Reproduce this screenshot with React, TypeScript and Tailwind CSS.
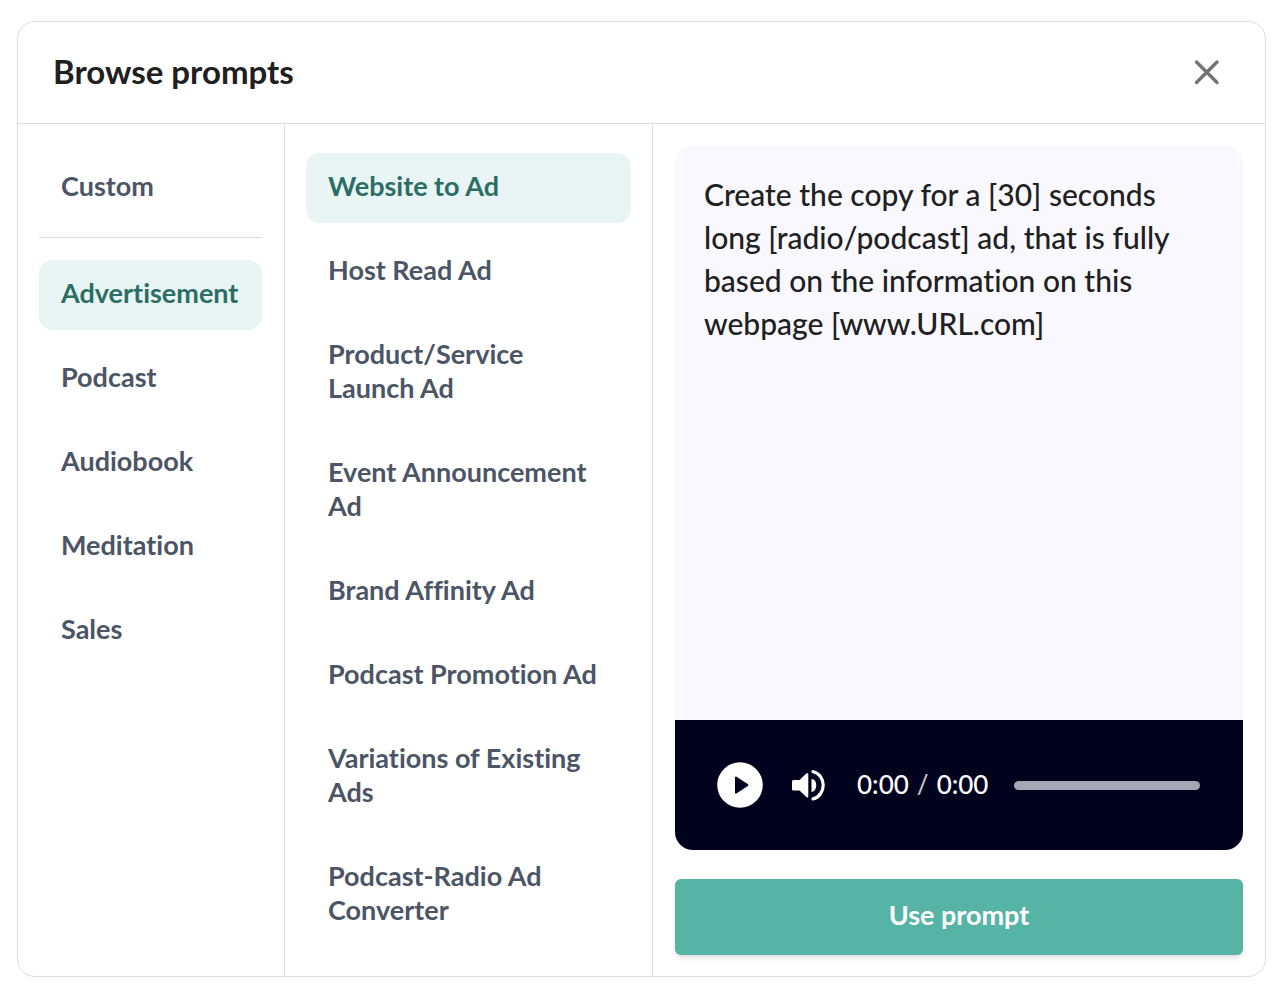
import React, { useState } from 'react';
import clsx from 'clsx';

const CATEGORIES = ['Advertisement', 'Podcast', 'Audiobook', 'Meditation', 'Sales'];

const PROMPTS = [
  'Website to Ad',
  'Host Read Ad',
  'Product/Service Launch Ad',
  'Event Announcement Ad',
  'Brand Affinity Ad',
  'Podcast Promotion Ad',
  'Variations of Existing Ads',
  'Podcast-Radio Ad Converter',
];

interface MenuItemProps {
  label: string;
  isActive: boolean;
  onSelect: (label: string) => void;
}

function MenuItem({ label, isActive, onSelect }: MenuItemProps) {
  return (
    <button
      type="button"
      aria-pressed={isActive}
      onClick={() => onSelect(label)}
      className={clsx(
        'w-full cursor-pointer rounded-[14px] px-[22px] pt-4 pb-5 text-left text-[27px] leading-[34px] font-bold',
        isActive ? 'bg-[#e9f5f5] text-[#2c6e63]' : 'text-[#4c5566]'
      )}
    >
      {label}
    </button>
  );
}

function AudioPlayer() {
  const [position, setPosition] = useState(0);

  return (
    <div className="flex h-[130px] items-center bg-[#00021e] pr-[43px] pl-[42px] text-white">
      <button type="button" aria-label="Play" className="shrink-0 cursor-pointer">
        <svg width="46" height="46" viewBox="0 0 46 46">
          <circle cx="23" cy="23" r="22.8" fill="#fff" />
          <path d="M19 15.5v15.2L30.5 23z" fill="#00021e" stroke="#00021e" strokeWidth="2" strokeLinejoin="round" />
        </svg>
      </button>

      <button type="button" aria-label="Mute" className="ml-7 shrink-0 cursor-pointer">
        <svg width="36" height="36" viewBox="0 0 36 36" fill="#fff">
          <path d="M2.5 13h6l6.8-6.6q2-1.400 2 1v21.500q0 2.400-2 1l-6.800-6.300H2.500q-1.500 0-1.500-1.500v-7.600q0-1.500 1.500-1.500z" />
          <path d="M20.5 12c3 0 4.700 2.900 4.700 6.200s-1.700 6.700-4.700 6.700z" />
          <path d="M22 4.700c6.500 1.500 10.200 7.300 10.200 13.500S28.500 30.300 22 31.900" fill="none" stroke="#fff" strokeWidth="3.2" strokeLinecap="round" />
        </svg>
      </button>

      <div className="ml-[30px] flex shrink-0 gap-2 pb-0.5 text-[26px] leading-8 font-medium">
        <span>0:00</span>
        <span className="text-[#c3c4cc]">/</span>
        <span>0:00</span>
      </div>

      <input
        type="range"
        aria-label="Seek"
        min={0}
        max={100}
        value={position}
        onChange={(e) => setPosition(Number(e.target.value))}
        className="ml-[26px] h-[9px] min-w-0 flex-1 cursor-pointer appearance-none rounded-full bg-[#a6a7b4] [&::-webkit-slider-thumb]:h-0 [&::-webkit-slider-thumb]:w-0 [&::-webkit-slider-thumb]:appearance-none"
      />
    </div>
  );
}

export default function App() {
  const [category, setCategory] = useState('Advertisement');
  const [prompt, setPrompt] = useState('Website to Ad');

  return (
    <main className="bg-white py-[21px] pr-[22px] pl-[17px] font-['Lato','Liberation_Sans',sans-serif] [font-variant-ligatures:none]">
      <section aria-labelledby="dialog-title" className="rounded-[18px] border border-[#dddddd]">
        <header className="flex h-[102px] items-center justify-between border-b border-[#dddddd] pr-[42px] pl-[35px]">
          <h1 id="dialog-title" className="pb-1 text-[33px] leading-10 font-bold text-[#202020]">
            Browse prompts
          </h1>
          <button type="button" aria-label="Close" className="cursor-pointer">
            <svg width="32" height="32" viewBox="0 0 32 32" fill="none" stroke="#737373" strokeWidth="3.4" strokeLinecap="round">
              <path d="M5.5 5l20.500 20.500M26 5l-20.500 20.500" />
            </svg>
          </button>
        </header>

        <div className="grid grid-cols-[267px_368px_minmax(0,1fr)]">
          {/* Categories */}
          <nav aria-label="Categories" className="border-r border-[#dddddd] py-[29px] pr-[22px] pl-[21px]">
            <MenuItem label="Custom" isActive={category === 'Custom'} onSelect={setCategory} />
            <hr className="mt-3.5 mb-[22px] border-[#dddddd]" />
            <div className="flex flex-col gap-3.5">
              {CATEGORIES.map((name) => (
                <MenuItem key={name} label={name} isActive={category === name} onSelect={setCategory} />
              ))}
            </div>
          </nav>

          {/* Prompts in the selected category */}
          <nav aria-label="Prompts" className="flex flex-col gap-3.5 border-r border-[#dddddd] px-[21px] py-[29px]">
            {PROMPTS.map((name) => (
              <MenuItem key={name} label={name} isActive={prompt === name} onSelect={setPrompt} />
            ))}
          </nav>

          {/* Preview */}
          <div className="flex flex-col gap-[29px] p-[22px] pb-[21px]">
            <div className="flex flex-1 flex-col overflow-hidden rounded-[18px] bg-[#f9f8ff]">
              <p className="flex-1 px-[29px] py-[27px] text-[30px] leading-[43px] font-medium text-[#202020]">
                Create the copy for a [30] seconds long [radio/podcast] ad, that is fully based on the information on
                this webpage [www.URL.com]
              </p>
              <AudioPlayer />
            </div>
            <button
              type="button"
              className="h-[76px] cursor-pointer rounded-md bg-[#56b4a7] pb-1 text-[27px] leading-[34px] font-bold text-white shadow-md"
            >
              Use prompt
            </button>
          </div>
        </div>
      </section>
    </main>
  );
}
